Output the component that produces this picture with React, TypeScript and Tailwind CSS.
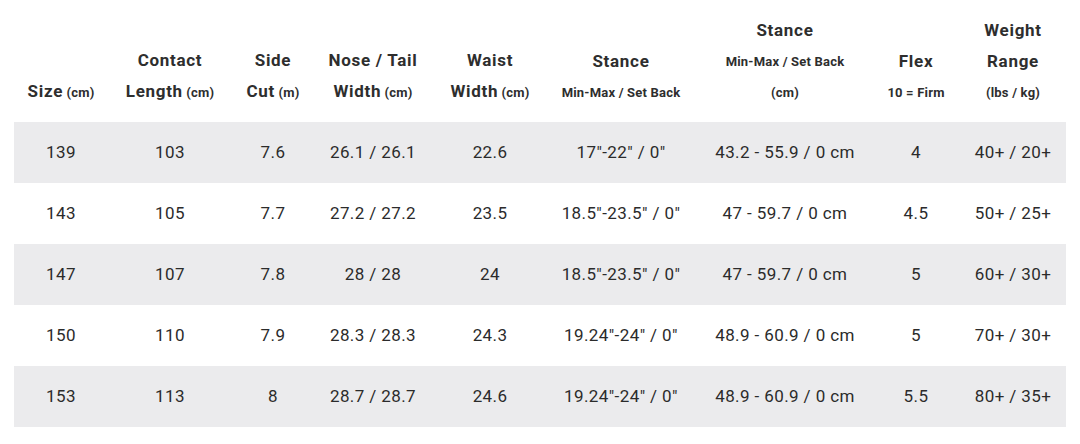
import React from "react";

const cols = "grid-cols-[94px_124px_82px_118px_116px_146px_182px_80px_114px]";

type H = { lines: { t: string; small?: string; size?: "big" | "small" }[] };

const headers: H[] = [
  { lines: [{ t: "Size", small: "(cm)" }] },
  { lines: [{ t: "Contact" }, { t: "Length", small: "(cm)" }] },
  { lines: [{ t: "Side" }, { t: "Cut", small: "(m)" }] },
  { lines: [{ t: "Nose / Tail" }, { t: "Width", small: "(cm)" }] },
  { lines: [{ t: "Waist" }, { t: "Width", small: "(cm)" }] },
  { lines: [{ t: "Stance" }, { t: "Min-Max / Set Back", size: "small" }] },
  { lines: [{ t: "Stance" }, { t: "Min-Max / Set Back", size: "small" }, { t: "(cm)", size: "small" }] },
  { lines: [{ t: "Flex" }, { t: "10 = Firm", size: "small" }] },
  { lines: [{ t: "Weight" }, { t: "Range" }, { t: "(lbs / kg)", size: "small" }] },
];

const rows = [
  ["139", "103", "7.6", "26.1 / 26.1", "22.6", '17"-22" / 0"', "43.2 - 55.9 / 0 cm", "4", "40+ / 20+"],
  ["143", "105", "7.7", "27.2 / 27.2", "23.5", '18.5"-23.5" / 0"', "47 - 59.7 / 0 cm", "4.5", "50+ / 25+"],
  ["147", "107", "7.8", "28 / 28", "24", '18.5"-23.5" / 0"', "47 - 59.7 / 0 cm", "5", "60+ / 30+"],
  ["150", "110", "7.9", "28.3 / 28.3", "24.3", '19.24"-24" / 0"', "48.9 - 60.9 / 0 cm", "5", "70+ / 30+"],
  ["153", "113", "8", "28.7 / 28.7", "24.6", '19.24"-24" / 0"', "48.9 - 60.9 / 0 cm", "5.5", "80+ / 35+"],
];

export default function App() {
  return (
    <div className="w-[1080px] h-[444px] bg-white px-[14px] text-[#2b2b2b] overflow-hidden" style={{ fontFamily: "Roboto, 'Liberation Sans', sans-serif" }}>
      <div className={`grid ${cols} h-[122px] items-end pb-[14px]`}>
        {headers.map((h, i) => (
          <div key={i} className="flex flex-col items-center">
            {h.lines.map((l, j) => (
              <div
                key={j}
                className={`leading-[31px] whitespace-nowrap text-[#2e2e2e] font-bold ${
                  l.size === "small" ? "text-[13px] tracking-[0.2px]" : "text-[17px] tracking-[0.7px]"
                }`}
              >
                {l.t}
                {l.small && <span className="text-[13px] tracking-[0.2px]"> {l.small}</span>}
              </div>
            ))}
          </div>
        ))}
      </div>
      {rows.map((r, i) => (
        <div key={i} className={`grid ${cols} h-[61px] items-center ${i % 2 === 0 ? "bg-[#ebebed]" : "bg-white"}`}>
          {r.map((c, j) => (
            <div key={j} className="flex justify-center text-[17px] tracking-[0.4px] whitespace-nowrap">
              {c}
            </div>
          ))}
        </div>
      ))}
    </div>
  );
}
